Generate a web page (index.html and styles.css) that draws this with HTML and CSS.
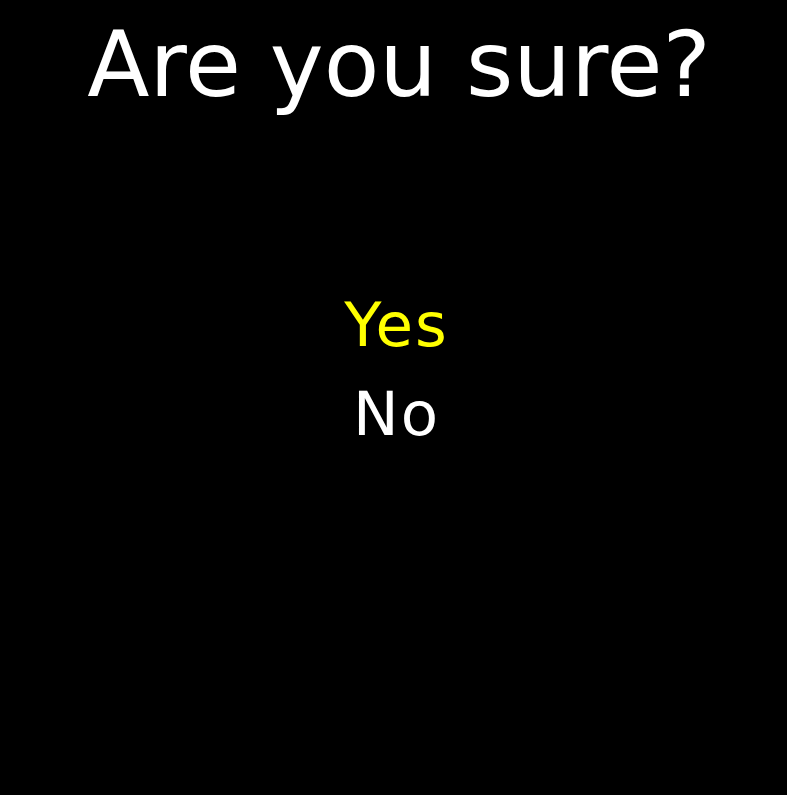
FILE: index.html
```html
<!DOCTYPE html>
<html>
<head>
<meta charset="utf-8">
<link rel="stylesheet" href="styles.css">
</head>
<body>
<div class="screen">
  <h1 class="title">Are you sure?</h1>
  <ul class="menu">
    <li class="item selected">Yes</li>
    <li class="item">No</li>
  </ul>
</div>
</body>
</html>
```
FILE: styles.css
```css
html, body {
  margin: 0;
  padding: 0;
  background: #000;
  height: 100%;
}
.screen {
  font-family: "DejaVu Sans", sans-serif;
  color: #fff;
  display: flex;
  flex-direction: column;
  align-items: center;
  padding-top: 12px;
}
.title {
  margin: 0;
  padding-left: 11px;
  font-size: 91px;
  font-weight: normal;
  line-height: 106px;
}
.menu {
  list-style: none;
  margin: 162px 0 0;
  padding: 0 0 0 4px;
  display: flex;
  flex-direction: column;
  align-items: center;
}
.item {
  font-size: 61px;
  line-height: 89px;
  letter-spacing: 2px;
  padding-left: 2px;
}
.selected {
  color: #ffff00;
}
```
